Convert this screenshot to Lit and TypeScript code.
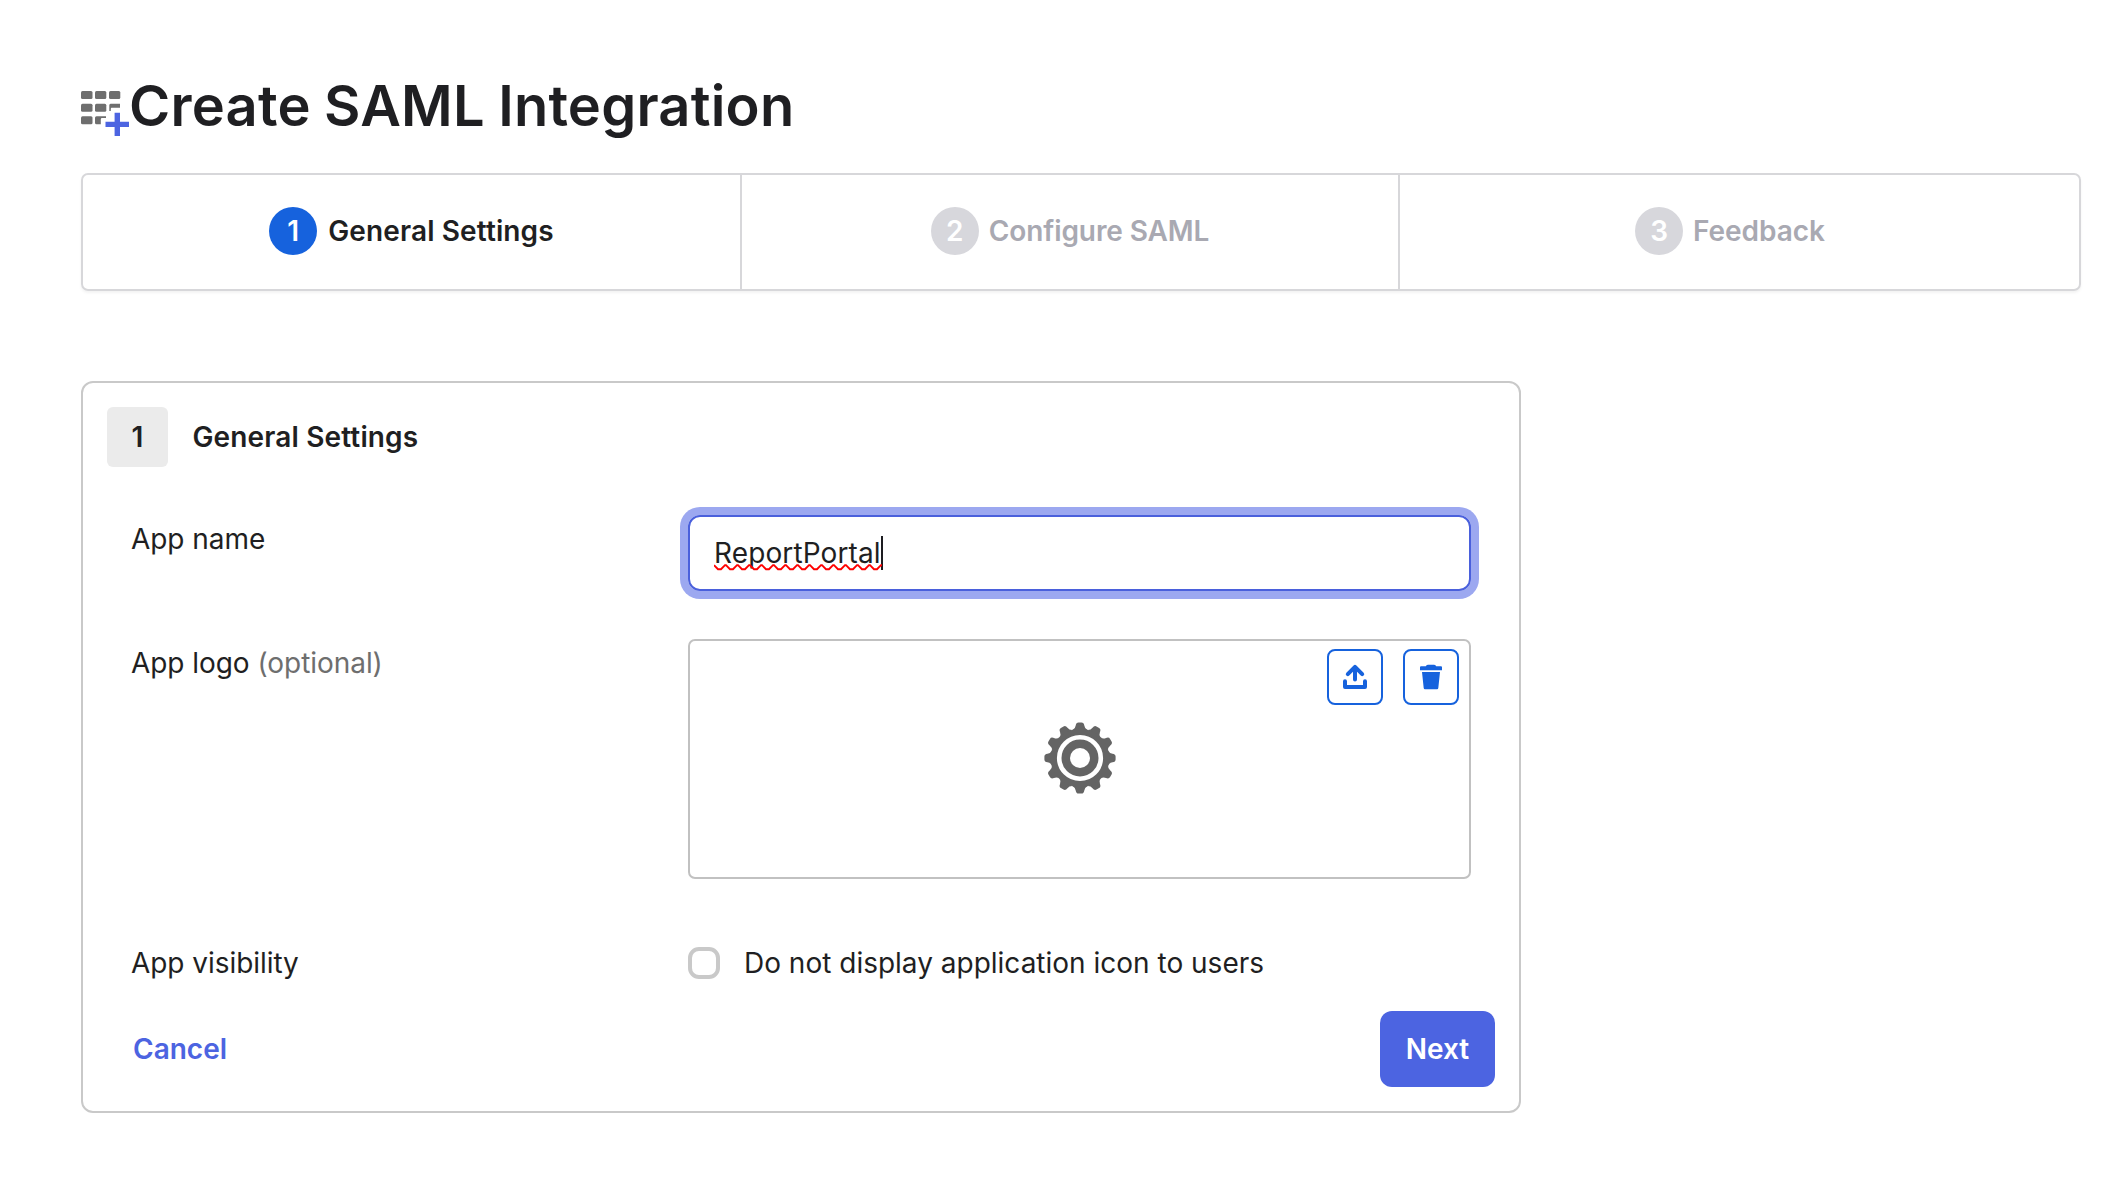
import { LitElement, html, svg, css } from "lit";
import { customElement, property } from "lit/decorators.js";

@customElement("step-bar")
class StepBar extends LitElement {
  @property({ type: Number }) current = 1;
  static styles = css`
    :host { display: block; }
    .bar {
      display: grid; grid-template-columns: 659px 658px 1fr;
      height: 118px; box-sizing: border-box;
      border: 2px solid #d7d7da; border-radius: 7px;
      box-shadow: 0 2px 3px rgba(0, 0, 0, 0.05);
    }
    .step {
      display: flex; align-items: center; justify-content: center; gap: 10px;
      border-right: 2px solid #d7d7da; color: #a9a9b2; padding-bottom: 2px;
      font-size: 28px; font-weight: 600; letter-spacing: -0.1px;
    }
    .step:last-child { border-right: 0; padding-right: 19px; letter-spacing: -0.05px; }
    .num {
      width: 48px; height: 48px; border-radius: 50%; background: #d7d7dc; color: #fff;
      display: flex; align-items: center; justify-content: center; flex: none;
    }
    .step.active { color: #1f1f22; letter-spacing: 0.12px; gap: 11px; }
    .active .num { background: #1662dd; }
  `;
  render() {
    return html`<div class="bar">
      ${["General Settings", "Configure SAML", "Feedback"].map(
        (t, i) => html`<div class="step ${i + 1 === this.current ? "active" : ""}">
          <span class="num">${i + 1}</span><span class="name">${t}</span>
        </div>`
      )}
    </div>`;
  }
}

const teeth = Array.from({ length: 12 }, (_, i) => i * 30);
const squiggle =
  "M0 1.2" +
  Array.from({ length: 14 }, (_, i) => ` L${i * 12 + 4} 5.2 H${i * 12 + 7} L${i * 12 + 11} 1.2 H${i * 12 + 12}`).join("");

@customElement("app-root")
class AppRoot extends LitElement {
  static styles = css`
    :host {
      display: block; box-sizing: border-box; width: 2114px; height: 1200px;
      padding: 72px 33px 0 81px; background: #fff; color: #1f1f22;
      font-family: Inter, "Liberation Sans", sans-serif; font-size: 28px; line-height: 34px;
    }
    .head { display: flex; height: 101px; }
    .head svg { margin-top: 19px; flex: none; }
    h1 {
      margin: 0; font-size: 56px; line-height: 68px; font-weight: 600; white-space: nowrap;
      letter-spacing: 0.22px; word-spacing: -1px;
    }
    .panel {
      box-sizing: border-box; width: 1440px; height: 732px; margin-top: 90px;
      border: 2px solid #c9c9c9; border-radius: 12px; padding: 24px;
    }
    .section { display: flex; align-items: center; gap: 24.5px; font-weight: 600; height: 60px; letter-spacing: 0.14px; }
    .badge {
      width: 61px; height: 60px; border-radius: 6px; background: #ebebeb;
      display: flex; align-items: center; justify-content: center;
    }
    .row { display: grid; grid-template-columns: 557px 783px; padding-left: 24px; }
    .row.name { margin-top: 48px; height: 124px; }
    .row.logo { height: 307px; }
    .row.vis { height: 65px; }
    .label { letter-spacing: -0.05px; }
    .row.name .label { padding-top: 7px; }
    .row.logo .label { padding-top: 7px; }
    .opt { color: #6e6e6e; }
    .input {
      box-sizing: border-box; height: 76px; border: 2px solid #4a60dc; border-radius: 12px;
      box-shadow: 0 0 0 8px #9ca8f0; padding: 19px 25px 0 24px; display: flex; align-items: flex-start;
    }
    .value { position: relative; white-space: nowrap; width: 167px; letter-spacing: 0.12px; }
    .squiggle { position: absolute; left: 0; top: 28px; }
    .caret { width: 2px; height: 34px; background: #1d1d21; }
    .drop {
      position: relative; box-sizing: border-box; height: 240px; border: 2px solid #c1c1c1;
      border-radius: 7px; display: flex; align-items: center; justify-content: center;
      padding-bottom: 2px;
    }
    .tools { position: absolute; top: 8px; right: 10px; display: flex; gap: 20px; }
    .tool {
      box-sizing: border-box; width: 56px; height: 56px; border: 2px solid #1662dd;
      border-radius: 8px; display: flex; align-items: center; justify-content: center;
    }
    .check { display: flex; gap: 24px; height: 34px; align-items: center; }
    .box { box-sizing: border-box; width: 32px; height: 32px; border: 4px solid #c9c9c9; border-radius: 11px; }
    .foot {
      display: flex; align-items: center; justify-content: space-between;
      padding-left: 26px; font-weight: 600;
    }
    .cancel { color: #4c64e1; }
    .next {
      width: 115px; height: 76px; border-radius: 12px; background: #4c64e1; color: #fff;
      display: flex; align-items: center; justify-content: center;
    }
  `;
  render() {
    return html`
      <div class="head">
        <svg width="48" height="46" viewBox="0 0 48 46">
          <g fill="#6e6e6e">
            <rect x="0" y="0" width="11.5" height="8" rx="1.5" /><rect x="14" y="0" width="11.3" height="8" rx="1.5" /><rect x="28" y="0" width="11.3" height="8" rx="1.5" />
            <rect x="0" y="12.7" width="11.5" height="8" rx="1.5" /><rect x="14" y="12.7" width="11.3" height="8" rx="1.5" />
            <path d="M29.5 12.7H39V16.7H30.5Q29.8 16.7 29.8 18V20H28.3V14.2Q28.3 12.7 29.5 12.7Z" />
            <rect x="0" y="25.3" width="11.5" height="8" rx="1.5" />
            <path d="M15.5 25.3H25V27H21Q19.8 27 19.8 28.3V33.3H15.5Q14 33.3 14 31.8V26.8Q14 25.3 15.5 25.3Z" />
          </g>
          <path d="M36.3 21.7V45M24.5 33.4H48" stroke="#4c64e1" stroke-width="5.4" />
        </svg>
        <h1>Create SAML Integration</h1>
      </div>
      <step-bar .current=${1}></step-bar>
      <div class="panel">
        <div class="section"><span class="badge">1</span><span>General Settings</span></div>
        <div class="row name">
          <div class="label">App name</div>
          <div class="input">
            <span class="value">ReportPortal<svg class="squiggle" width="168" height="7" viewBox="0 0 168 7"><path d=${squiggle} fill="none" stroke="#f00" stroke-width="1.9" /></svg></span><span class="caret"></span>
          </div>
        </div>
        <div class="row logo">
          <div class="label">App logo <span class="opt">(optional)</span></div>
          <div class="drop">
            <svg width="72" height="72" viewBox="-36 -36 72 72">
              ${teeth.map((a) => svg`<path transform="rotate(${a})" d="M-7.5 -28Q-4.6 -29.5 -4.3 -32.5Q-3.9 -35.6 -1.5 -35.6H1.5Q3.9 -35.6 4.3 -32.5Q4.6 -29.5 7.5 -28Z" fill="#646464" />`)}
              <circle r="29.3" fill="#646464" />
              <circle r="20.8" fill="none" stroke="#fff" stroke-width="4.6" />
              <circle r="10" fill="#fff" />
            </svg>
            <div class="tools">
              <span class="tool"><svg width="26" height="26" viewBox="0 0 26 26" fill="none" stroke="#1662dd" stroke-width="4" stroke-linecap="round" stroke-linejoin="round">
                <path d="M13 15.5V3M5.8 10.2L13 2.9L20.2 10.2" />
                <path d="M3 17.3V23H23V17.3" />
              </svg></span>
              <span class="tool"><svg width="24" height="26" viewBox="0 0 24 26" fill="#1662dd">
                <path d="M2 2.300H6.8Q7.300 .8 8.8 .8H15.2Q16.700 .8 17.200 2.300H22Q23 2.300 23 3.300V6.200H1V3.300Q1 2.300 2 2.300ZM3 8H21L19.300 24Q19.200 25.200 18 25.200H6Q4.800 25.200 4.700 24Z" />
              </svg></span>
            </div>
          </div>
        </div>
        <div class="row vis">
          <div class="label">App visibility</div>
          <div class="check"><span class="box"></span><span>Do not display application icon to users</span></div>
        </div>
        <div class="foot"><span class="cancel">Cancel</span><span class="next">Next</span></div>
      </div>
    `;
  }
}
